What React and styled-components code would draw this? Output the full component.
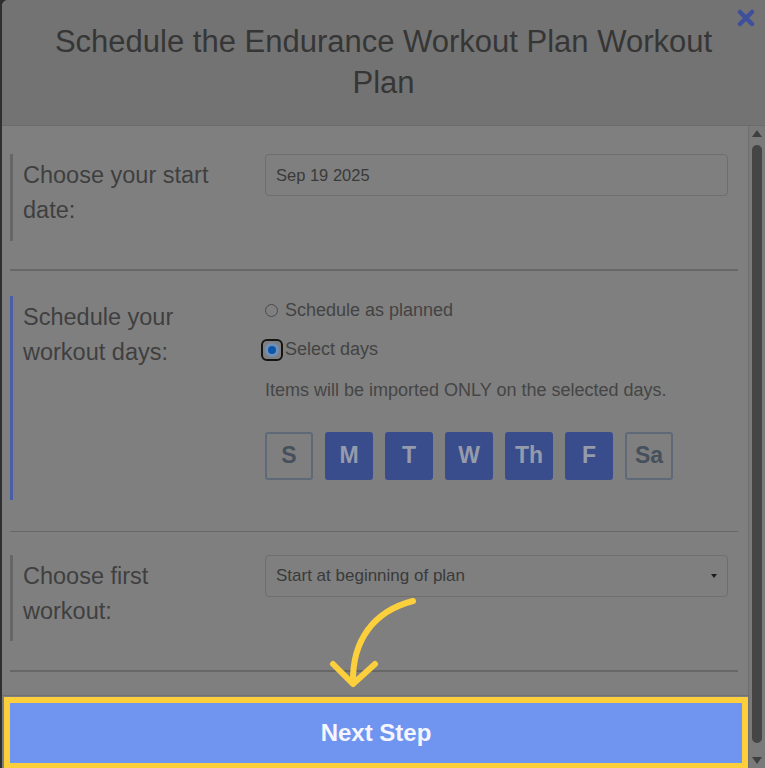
import React from 'react'
import styled, { createGlobalStyle } from 'styled-components'

const GlobalStyle = createGlobalStyle`
  html, body {
    margin: 0;
    padding: 0;
    background: #2f2f2f;
  }
  body {
    font-family: "Liberation Sans", Arial, Helvetica, sans-serif;
    overflow: hidden;
  }
`

const Modal = styled.div`
  position: relative;
  margin-left: 2px;
  width: 763px;
  height: 768px;
  background: #7f7f7f;
  border-top-left-radius: 6px;
  overflow: hidden;
  display: flex;
  flex-direction: column;
`

const Header = styled.header`
  position: relative;
  height: 126px;
  box-sizing: border-box;
  padding: 21px 40px 0 40px;
  background: #737373;
  border-bottom: 1px solid #6b6b6b;
  text-align: center;
`

const Title = styled.h1`
  margin: 0;
  font-size: 31px;
  line-height: 41px;
  font-weight: 400;
  color: #363636;
`

const CloseButton = styled.button`
  position: absolute;
  top: 9px;
  right: 10px;
  width: 18px;
  height: 18px;
  padding: 0;
  border: 0;
  background: none;
  display: flex;
`

const Body = styled.div`
  flex: 1;
  display: flex;
  min-height: 0;
`

const ScrollArea = styled.div`
  flex: 1;
  display: flex;
  flex-direction: column;
  padding-top: 28px;
  overflow: hidden;
`

const Section = styled.div`
  display: flex;
  margin: 0 20px 0 8px;
  border-left: 3px solid ${p => (p.$active ? '#4a5ea6' : '#666666')};
  padding-left: 10px;
  min-height: ${p => p.$min}px;
`

const Label = styled.div`
  width: 242px;
  flex-shrink: 0;
  box-sizing: border-box;
  padding: 4px 37px 0 0;
  font-size: 23.5px;
  line-height: 35px;
  color: #3f3f3f;
`

const Controls = styled.div`
  flex: 1;
  display: flex;
  flex-direction: column;
  padding-bottom: ${p => p.$pb || 0}px;
`

const Field = styled.div`
  height: 42px;
  box-sizing: border-box;
  border: 1px solid #6e6e6e;
  border-radius: 4px;
  padding: 0 10px;
  display: flex;
  align-items: center;
  justify-content: space-between;
  font-size: ${p => p.$size || 17}px;
  color: #3a3a3a;
`

const Caret = styled.span`
  width: 0;
  height: 0;
  border-left: 3px solid transparent;
  border-right: 3px solid transparent;
  border-top: 4px solid #1c1c1c;
`

const Divider = styled.hr`
  margin: ${p => p.$top}px 10px ${p => p.$bottom}px 8px;
  border: 0;
  height: 2px;
  background: #676767;
`

const RadioRow = styled.label`
  display: flex;
  align-items: center;
  height: 30px;
  margin-top: ${p => p.$mt || 0}px;
  font-size: 18px;
  color: #434343;
`

const RadioCircle = styled.span`
  width: 13px;
  height: 13px;
  box-sizing: border-box;
  border-radius: 50%;
  border: 1px solid #4a4a4a;
  margin-right: 7px;
`

const FocusRing = styled.span`
  width: 22px;
  height: 22px;
  box-sizing: border-box;
  margin-left: -4px;
  margin-right: 2px;
  border: 2px solid #141414;
  border-radius: 6px;
  display: flex;
  align-items: center;
  justify-content: center;
`

const CheckedDot = styled.span`
  width: 14px;
  height: 14px;
  box-sizing: border-box;
  border-radius: 50%;
  border: 3px solid #6e8fb8;
  background: #0b56a8;
`

const Note = styled.p`
  margin: 10px 0 0;
  font-size: 18px;
  line-height: 30px;
  color: #454545;
`

const Days = styled.div`
  display: flex;
  gap: 12px;
  margin-top: 27px;
`

const Day = styled.button`
  width: 48px;
  height: 48px;
  padding: 0;
  border-radius: 3px;
  box-sizing: border-box;
  font-family: inherit;
  font-size: 23px;
  font-weight: 700;
  border: 2px solid ${p => (p.$on ? '#394d8c' : '#5e6a77')};
  background: ${p => (p.$on ? '#394d8c' : 'transparent')};
  color: ${p => (p.$on ? '#959bab' : '#45505c')};
`

const Footer = styled.div`
  border-top: 1px solid #717171;
  margin-top: 23px;
  padding: 1px 0 0 2px;
`

const NextButton = styled.button`
  width: 100%;
  height: 71px;
  box-sizing: border-box;
  border: 6px solid #fdd03b;
  border-bottom-width: 5px;
  background: #7095f0;
  color: #f5f6ff;
  font-family: inherit;
  font-size: 24px;
  font-weight: 700;
`

const Scrollbar = styled.div`
  width: 16px;
  background: #7a7a7a;
  border-left: 1px solid #6e6e6e;
  display: flex;
  flex-direction: column;
  align-items: center;
`

const ArrowUp = styled.span`
  margin-top: 4px;
  width: 0;
  height: 0;
  border-left: 5px solid transparent;
  border-right: 5px solid transparent;
  border-bottom: 7px solid #3f3f3f;
`

const ArrowDown = styled.span`
  margin-bottom: 4px;
  width: 0;
  height: 0;
  border-left: 5px solid transparent;
  border-right: 5px solid transparent;
  border-top: 7px solid #3f3f3f;
`

const Thumb = styled.span`
  flex: 1;
  width: 10px;
  margin: 8px 0 14px;
  border-radius: 5px;
  background: #454545;
`

const Pointer = styled.svg`
  position: absolute;
  left: 0;
  top: 0;
  pointer-events: none;
`

const days = [
  { k: 'S', on: false },
  { k: 'M', on: true },
  { k: 'T', on: true },
  { k: 'W', on: true },
  { k: 'Th', on: true },
  { k: 'F', on: true },
  { k: 'Sa', on: false },
]

export default function App() {
  return (
    <>
      <GlobalStyle />
      <Modal>
        <Header>
          <Title>Schedule the Endurance Workout Plan Workout Plan</Title>
          <CloseButton aria-label="close">
            <svg width="18" height="18" viewBox="0 0 18 18">
              <path d="M3 3 L15 15 M15 3 L3 15" stroke="#3e509c" strokeWidth="4.5" strokeLinecap="round" />
            </svg>
          </CloseButton>
        </Header>
        <Body>
          <ScrollArea>
            <Section $min={87}>
              <Label>Choose your start date:</Label>
              <Controls>
                <Field $size={16.5}>Sep 19 2025</Field>
              </Controls>
            </Section>
            <Divider $top={28} $bottom={25} />
            <Section $active>
              <Label>Schedule your workout days:</Label>
              <Controls $pb={20}>
                <RadioRow>
                  <RadioCircle />
                  Schedule as planned
                </RadioRow>
                <RadioRow $mt={9}>
                  <FocusRing>
                    <CheckedDot />
                  </FocusRing>
                  Select days
                </RadioRow>
                <Note>Items will be imported ONLY on the selected days.</Note>
                <Days>
                  {days.map(d => (
                    <Day key={d.k} $on={d.on}>{d.k}</Day>
                  ))}
                </Days>
              </Controls>
            </Section>
            <Divider $top={31} $bottom={23} />
            <Section $min={86}>
              <Label>Choose first workout:</Label>
              <Controls>
                <Field>
                  Start at beginning of plan
                  <Caret />
                </Field>
              </Controls>
            </Section>
            <Divider $top={29} $bottom={0} />
            <Footer>
              <NextButton>Next Step</NextButton>
            </Footer>
          </ScrollArea>
          <Scrollbar>
            <ArrowUp />
            <Thumb />
            <ArrowDown />
          </Scrollbar>
        </Body>
        <Pointer width="763" height="768" viewBox="0 0 763 768">
          <path
            d="M411 601 C 372 611, 350 640, 351 683"
            fill="none"
            stroke="#fccf3d"
            strokeWidth="6"
            strokeLinecap="round"
          />
          <path
            d="M331 664 L351 684 L373 664"
            fill="none"
            stroke="#fccf3d"
            strokeWidth="6"
            strokeLinecap="round"
            strokeLinejoin="round"
          />
        </Pointer>
      </Modal>
    </>
  )
}
